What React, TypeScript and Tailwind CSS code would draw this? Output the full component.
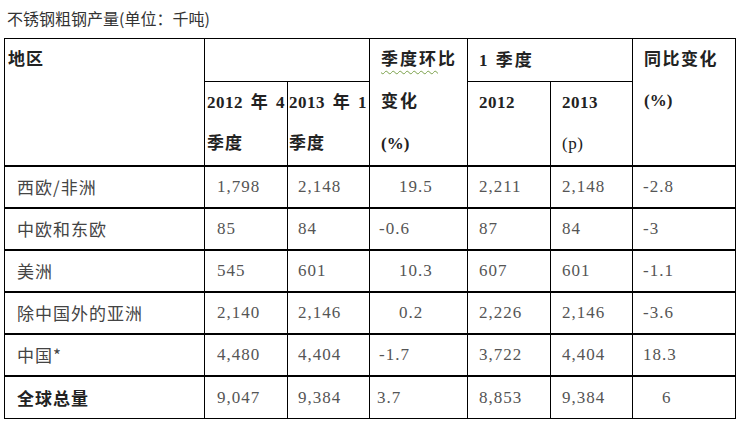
import React from "react";

interface Row {
  region: string;
  q4: string;
  q1: string;
  qoq: string;
  qoqPad?: boolean;
  y2012: string;
  y2013: string;
  yoy: string;
  yoyPad?: boolean;
  bold?: boolean;
}

const rows: Row[] = [
  { region: "西欧/非洲", q4: "1,798", q1: "2,148", qoq: "19.5", qoqPad: true, y2012: "2,211", y2013: "2,148", yoy: "-2.8" },
  { region: "中欧和东欧", q4: "85", q1: "84", qoq: "-0.6", y2012: "87", y2013: "84", yoy: "-3" },
  { region: "美洲", q4: "545", q1: "601", qoq: "10.3", qoqPad: true, y2012: "607", y2013: "601", yoy: "-1.1" },
  { region: "除中国外的亚洲", q4: "2,140", q1: "2,146", qoq: "0.2", qoqPad: true, y2012: "2,226", y2013: "2,146", yoy: "-3.6" },
  { region: "中国*", q4: "4,480", q1: "4,404", qoq: "-1.7", y2012: "3,722", y2013: "4,404", yoy: "18.3" },
  { region: "全球总量", q4: "9,047", q1: "9,384", qoq: "3.7", y2012: "8,853", y2013: "9,384", yoy: "6", yoyPad: true, bold: true },
];

export default function App() {
  return (
    <div className="w-[738px] h-[421px] bg-white overflow-hidden">
      {/* 标题 */}
      <div className="h-[38px] pl-[7px] pt-[6px] text-[16px] leading-[24px] text-[#333] font-['Noto_Sans_CJK_SC',sans-serif]">
        不锈钢粗钢产量(单位：千吨)
      </div>

      <table className="ml-[4px] w-[731px] table-fixed border-collapse font-['Liberation_Serif','Noto_Sans_CJK_SC',serif] text-[17px]">
        <colgroup>
          <col className="w-[200px]" />
          <col className="w-[83px]" />
          <col className="w-[82px]" />
          <col className="w-[98px]" />
          <col className="w-[83px]" />
          <col className="w-[82px]" />
          <col className="w-[103px]" />
        </colgroup>
        <thead className="font-bold text-[#222] text-[17px]">
          <tr className="h-[43px]">
            <th rowSpan={2} className="border border-black border-b-2 align-top text-left font-bold pl-[3px] leading-[41px] tracking-[1px]">
              地区
            </th>
            <th colSpan={2} className="border border-black"></th>
            <th rowSpan={2} className="border border-black border-b-2 align-top text-left font-bold pl-[11px] leading-[42px] tracking-[2px]">
              <div>
                <span className="underline decoration-wavy decoration-[#7aa04a] decoration-1 underline-offset-[5px]">季度环</span>比
              </div>
              <div>变化</div>
              <div className="tracking-normal">(%)</div>
            </th>
            <th colSpan={2} className="border border-black text-left font-bold pl-[11px] leading-[41px] tracking-[2px]">
              1 季度
            </th>
            <th rowSpan={2} className="border border-black border-b-2 align-top text-left font-bold pl-[11px] leading-[41px] tracking-[1.5px]">
              <div>同比变化</div>
              <div className="tracking-normal">(%)</div>
            </th>
          </tr>
          <tr className="h-[83px]">
            <th className="border border-black border-b-2 align-top text-left font-bold pl-[2px] leading-[41px] whitespace-nowrap overflow-visible">
              <div className="[word-spacing:3px] tracking-[0.5px]">2012 年 4</div>
              <div className="tracking-[1px]">季度</div>
            </th>
            <th className="border border-black border-b-2 align-top text-left font-bold pl-[1px] leading-[41px] whitespace-nowrap">
              <div className="[word-spacing:3px] tracking-[0.5px]">2013 年 1</div>
              <div className="tracking-[1px]">季度</div>
            </th>
            <th className="border border-black border-b-2 align-top text-left font-bold pl-[11px] leading-[41px] tracking-[0.5px]">
              2012
            </th>
            <th className="border border-black border-b-2 align-top text-left font-bold pl-[11px] leading-[41px] tracking-[0.5px]">
              <div>2013</div>
              <div className="font-normal">(p)</div>
            </th>
          </tr>
        </thead>
        <tbody className="text-[#555] tracking-[1px]">
          {rows.map((r, i) => (
            <tr key={i} className="h-[42px]">
              <td
                className={
                  r.bold
                    ? "border border-black pl-[12px] font-bold text-[#222] font-['Noto_Sans_CJK_SC',sans-serif] text-[17px] tracking-[1px]"
                    : "border border-black border-b-2 pl-[12px] text-[#444] font-['Noto_Sans_CJK_SC',sans-serif] tracking-[1px]"
                }
              >
                {r.region}
              </td>
              <td className={r.bold ? "border border-black pl-[12px]" : "border border-black border-b-2 pl-[12px]"}>{r.q4}</td>
              <td className={r.bold ? "border border-black pl-[10px]" : "border border-black border-b-2 pl-[10px]"}>{r.q1}</td>
              <td
                className={
                  r.bold
                    ? "border border-black pl-[7px]"
                    : r.qoqPad
                    ? "border border-black border-b-2 pl-[29px]"
                    : "border border-black border-b-2 pl-[9px]"
                }
              >
                {r.qoq}
              </td>
              <td className={r.bold ? "border border-black pl-[11px]" : "border border-black border-b-2 pl-[11px]"}>{r.y2012}</td>
              <td className={r.bold ? "border border-black pl-[11px]" : "border border-black border-b-2 pl-[11px]"}>{r.y2013}</td>
              <td
                className={
                  r.yoyPad
                    ? "border border-black pl-[29px]"
                    : "border border-black border-b-2 pl-[10px]"
                }
              >
                {r.yoy}
              </td>
            </tr>
          ))}
        </tbody>
      </table>
    </div>
  );
}
